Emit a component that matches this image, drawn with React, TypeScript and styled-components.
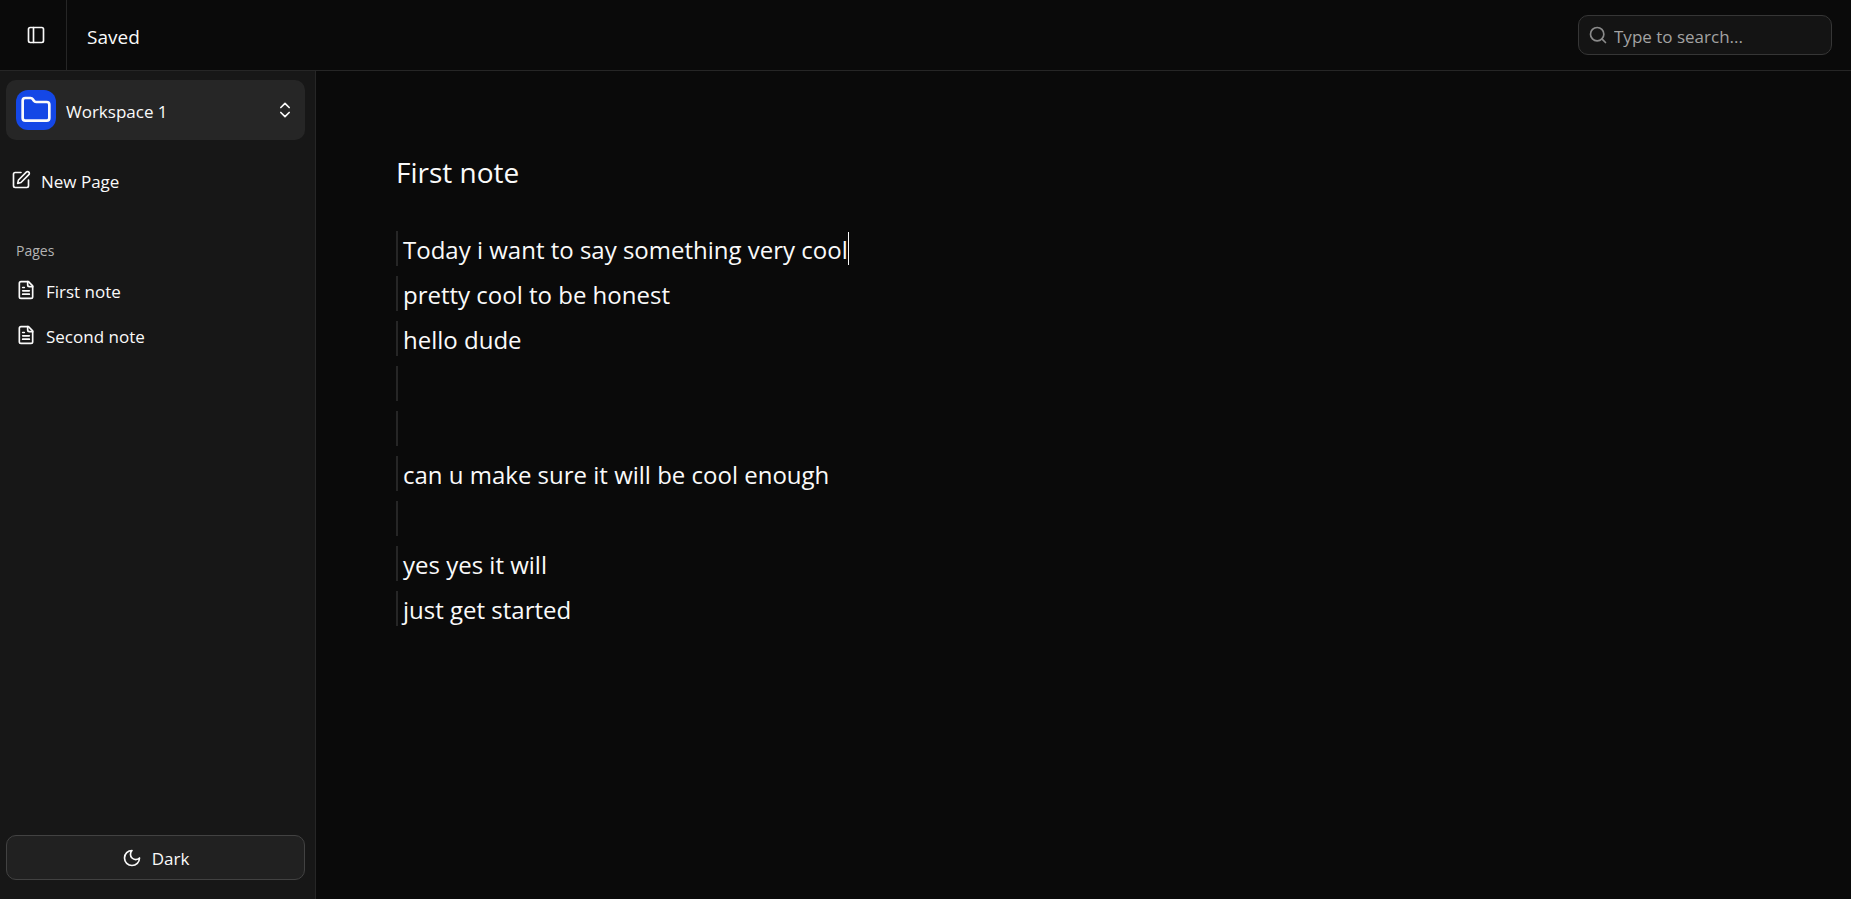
import React, { useState } from "react";
import styled, { createGlobalStyle } from "styled-components";
import { ChevronsUpDown, Folder, PanelLeft, Search } from "lucide-react";

const GlobalStyle = createGlobalStyle`
  *, *::before, *::after { box-sizing: border-box; }
  body {
    margin: 0;
    background: #0a0a0a;
    color: #fafafa;
    font-family: "Segoe UI", "Open Sans", "Noto Sans", sans-serif;
    font-size: 17px;
    line-height: 24px;
  }
  button, input { font: inherit; color: inherit; }
  button { cursor: pointer; }
`;

const Page = styled.div`
  display: flex;
  flex-direction: column;
  min-height: 100vh;
`;

const Header = styled.header`
  display: flex;
  align-items: center;
  height: 71px;
  padding-right: 19px;
  border-bottom: 1px solid #262626;
`;

const ToggleCell = styled.div`
  display: flex;
  align-self: stretch;
  align-items: center;
  justify-content: center;
  width: 67px;
  padding-left: 6px;
  border-right: 1px solid #262626;
`;

const IconButton = styled.button`
  display: flex;
  padding: 0;
  border: 0;
  background: none;
`;

const Status = styled.p`
  flex: 1;
  margin: 0;
  padding: 3px 20px 0;
  font-size: 19px;
`;

const SearchBox = styled.label`
  display: flex;
  align-items: center;
  gap: 6px;
  width: 254px;
  height: 40px;
  padding: 0 9px;
  border: 1px solid #363636;
  border-radius: 10px;
  background: #141414;
  color: #8a8a8a;
`;

const SearchInput = styled.input`
  flex: 1;
  min-width: 0;
  padding: 3px 0 0;
  border: 0;
  outline: 0;
  background: none;
  &::placeholder { color: #a3a3a3; opacity: 1; }
`;

const Body = styled.div`
  display: flex;
  flex: 1;
`;

const Sidebar = styled.aside`
  display: flex;
  flex-direction: column;
  flex: none;
  width: 316px;
  padding: 9px 10px 19px 6px;
  border-right: 1px solid #262626;
  background: #171717;
`;

const WorkspaceButton = styled.button`
  display: flex;
  align-items: center;
  gap: 10px;
  height: 60px;
  padding: 0 10px;
  border: 0;
  border-radius: 10px;
  background: #262626;
  text-align: left;
`;

const FolderBadge = styled.span`
  display: grid;
  place-items: center;
  width: 40px;
  height: 40px;
  border-radius: 12px;
  background: #1447e6;
`;

const Label = styled.span<{ $grow?: boolean }>`
  flex: ${(p) => (p.$grow ? "1" : "none")};
  padding-top: 3px;
`;

const StrokeIcon = styled.svg.attrs({
  width: 20,
  height: 20,
  viewBox: "0 0 24 24",
  fill: "none",
  stroke: "currentColor",
  strokeWidth: 2,
  strokeLinecap: "round",
  strokeLinejoin: "round",
  "aria-hidden": true,
})`
  flex: none;
`;

const RowButton = styled.button<{ $nested?: boolean }>`
  display: flex;
  align-items: center;
  gap: 10px;
  width: 100%;
  height: 40px;
  padding: 0 ${(p) => (p.$nested ? 10 : 5)}px;
  border: 0;
  background: none;
  text-align: left;
`;

const NewPage = styled.div`
  margin-top: 20px;
`;

const SectionTitle = styled.h2`
  margin: 41px 0 0;
  padding-left: 10px;
  color: #b3b3b3;
  font-size: 14px;
  font-weight: 400;
  line-height: 20px;
`;

const PageList = styled.ul`
  display: flex;
  flex-direction: column;
  gap: 5px;
  margin: 9px 0 0;
  padding: 0;
  list-style: none;
`;

const ThemeButton = styled.button`
  display: flex;
  align-items: center;
  justify-content: center;
  gap: 10px;
  height: 45px;
  margin-top: auto;
  border: 1px solid #424242;
  border-radius: 10px;
  background: #212121;
`;

const Editor = styled.main`
  flex: 1;
  min-width: 0;
  padding: 79px 80px;
`;

const NoteTitle = styled.h1`
  margin: 0;
  font-size: 28px;
  font-weight: 400;
  line-height: 44px;
`;

const Lines = styled.div`
  display: flex;
  flex-direction: column;
  gap: 10px;
  margin-top: 37px;
`;

const Line = styled.p`
  display: flex;
  align-items: center;
  height: 35px;
  margin: 0;
  padding: 2px 0 0 5px;
  border-left: 2px solid #262626;
  font-size: 24px;
  line-height: 32px;
  white-space: pre;
`;

const Caret = styled.span`
  width: 1px;
  height: 33px;
  margin-top: -2px;
  background: #fafafa;
`;

const PenIcon = () => (
  <StrokeIcon>
    <path d="M12 3H5a2 2 0 0 0-2 2v14a2 2 0 0 0 2 2h14a2 2 0 0 0 2-2v-7" />
    <path d="M18.375 2.625a2.121 2.121 0 1 1 3 3L12 15l-4 1 1-4Z" />
  </StrokeIcon>
);

const FileIcon = () => (
  <StrokeIcon>
    <path d="M15 2H6a2 2 0 0 0-2 2v16a2 2 0 0 0 2 2h12a2 2 0 0 0 2-2V7Z" />
    <path d="M14 2v4a2 2 0 0 0 2 2h4" />
    <path d="M10 9H8M16 13H8M16 17H8" />
  </StrokeIcon>
);

const MoonIcon = () => (
  <StrokeIcon>
    <path d="M12 3a6 6 0 0 0 9 9 9 9 0 1 1-9-9Z" />
  </StrokeIcon>
);

const pages = ["First note", "Second note"];

const lines = [
  "Today i want to say something very cool",
  "pretty cool to be honest",
  "hello dude",
  "",
  "",
  "can u make sure it will be cool enough",
  "",
  "yes yes it will",
  "just get started",
];

export default function App() {
  const [query, setQuery] = useState("");
  return (
    <Page>
      <GlobalStyle />
      <Header>
        <ToggleCell>
          <IconButton aria-label="Toggle sidebar">
            <PanelLeft size={20} />
          </IconButton>
        </ToggleCell>
        <Status>Saved</Status>
        <SearchBox>
          <Search size={20} />
          <SearchInput
            aria-label="Search"
            placeholder="Type to search..."
            value={query}
            onChange={(e) => setQuery(e.target.value)}
          />
        </SearchBox>
      </Header>
      <Body>
        <Sidebar>
          <WorkspaceButton>
            <FolderBadge>
              <Folder size={32} />
            </FolderBadge>
            <Label $grow>Workspace 1</Label>
            <ChevronsUpDown size={20} />
          </WorkspaceButton>
          <NewPage>
            <RowButton>
              <PenIcon />
              <Label>New Page</Label>
            </RowButton>
          </NewPage>
          <SectionTitle>Pages</SectionTitle>
          <PageList>
            {pages.map((name) => (
              <li key={name}>
                <RowButton $nested>
                  <FileIcon />
                  <Label>{name}</Label>
                </RowButton>
              </li>
            ))}
          </PageList>
          <ThemeButton>
            <MoonIcon />
            <Label>Dark</Label>
          </ThemeButton>
        </Sidebar>
        <Editor>
          <NoteTitle>First note</NoteTitle>
          <Lines>
            {lines.map((text, i) => (
              <Line key={i}>
                {text}
                {i === 0 && <Caret />}
              </Line>
            ))}
          </Lines>
        </Editor>
      </Body>
    </Page>
  );
}
